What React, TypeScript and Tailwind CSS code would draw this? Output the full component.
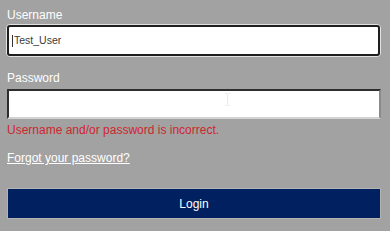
import React from "react";

export default function App() {
  return (
    <div className="w-[390px] h-[231px] bg-[#a2a2a2] overflow-hidden" style={{ fontFamily: '"Liberation Sans", Arial, sans-serif' }}>
      <div className="pl-[6px] pr-[9px] pt-[8px] flex flex-col">
        <label className="pl-px text-white text-[12px] leading-[14px] h-[14px]">Username</label>
        <div className="mt-[2px] h-[33px] rounded-[4px] border border-[#e2e2e2] flex">
          <div className="flex-1 rounded-[3px] border-2 border-[#1e1e1e] bg-white flex items-center pl-[3px]">
            <span className="w-px h-[12px] bg-[#333] mr-px" />
            <span className="text-[10.5px] text-[#3a3a3a]">Test_User</span>
          </div>
        </div>
        <label className="pl-px mt-[14px] text-white text-[12px] leading-[14px] h-[14px]">Password</label>
        <div className="relative ml-px mt-[4px] h-[30px] border-2 border-t-[#2e2e2e] border-l-[#2e2e2e] border-r-[#8a8a8a] border-b-[#d2d2d2] bg-white">
          <svg className="absolute left-[215px] top-[2px]" width="7" height="13" viewBox="0 0 7 13">
            <path d="M1 0.5h2M4 0.5h2M3.5 1v11M1 12.5h2M4 12.5h2" stroke="#ebebeb" strokeWidth="1" fill="none" />
          </svg>
        </div>
        <div className="pl-px mt-[4px] text-[#cf2530] text-[12px] leading-[14px]">Username and/or password is incorrect.</div>
        <div className="pl-px mt-[14px] text-white text-[12px] leading-[14px] underline">Forgot your password?</div>
        <div className="pl-px mt-[23px]">
          <button className="h-[31px] w-full bg-[#002060] border border-[#b3b3b3] text-white text-[12px] flex items-center justify-center">Login</button>
        </div>
      </div>
    </div>
  );
}
